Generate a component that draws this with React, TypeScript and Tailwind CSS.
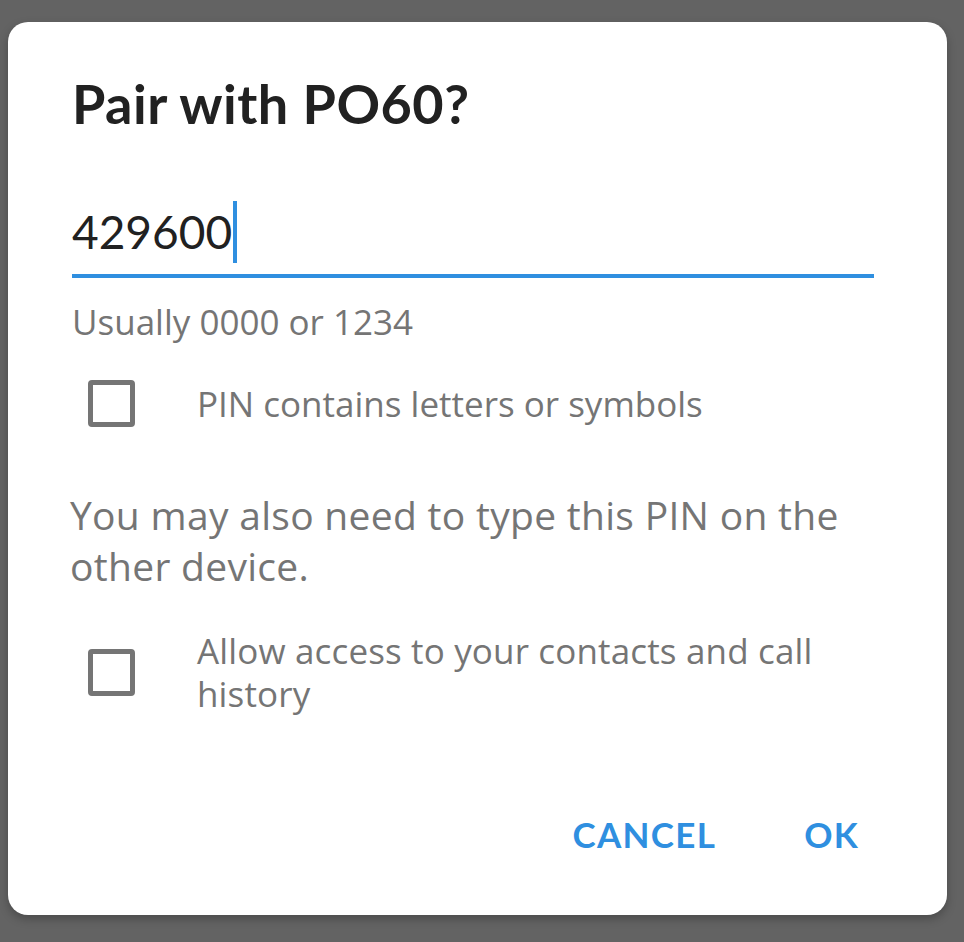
export default function App() {
  return (
    <div
      className="w-[964px] h-[942px] bg-[#636363] pt-[22px] pl-[8px]"
      style={{ fontFamily: "'Open Sans', 'Noto Sans', sans-serif" }}
    >
      <div className="w-[939px] h-[893px] rounded-[20px] bg-white shadow-[0_4px_10px_rgba(0,0,0,0.25)] flex flex-col pl-[64px] pr-[73px]">
        <h1
          className="mt-[54px] text-[54px] leading-[56px] font-bold tracking-[0.5px] text-[#212121]"
          style={{ fontFamily: "Lato, sans-serif" }}
        >
          Pair with PO60?
        </h1>

        <div className="mt-[69px] flex items-center h-[62px]">
          <span className="text-[46px] leading-[62px] text-[#212121]" style={{ fontFamily: "Lato, sans-serif" }}>
            429600
          </span>
          <span className="ml-[1px] w-[4px] h-[62px] bg-[#2f8fe0]" />
        </div>
        <div className="mt-[11px] h-[4px] bg-[#2f8fe0]" />

        <p className="mt-[24px] text-[35px] leading-[40px] text-[#757575]">Usually 0000 or 1234</p>

        <label className="mt-[38px] flex items-center">
          <span className="ml-[16px] shrink-0 w-[47px] h-[47px] rounded-[4px] border-[5px] border-[#757575]" />
          <span className="ml-[62px] text-[35px] leading-[42px] text-[#757575]">
            PIN contains letters or symbols
          </span>
        </label>

        <p className="mt-[62px] -ml-[2px] text-[39px] leading-[51px] tracking-[0.3px] text-[#757575]">
          You may also need to type this PIN on the other device.
        </p>

        <label className="mt-[38px] flex items-center">
          <span className="ml-[16px] shrink-0 w-[47px] h-[47px] rounded-[4px] border-[5px] border-[#757575]" />
          <span className="ml-[62px] text-[35px] leading-[43px] tracking-[0.15px] text-[#757575]">
            Allow access to your contacts and call history
          </span>
        </label>

        <div
          className="mt-auto mb-[61px] flex justify-end gap-[88px] pr-[15px]"
          style={{ fontFamily: "Lato, sans-serif" }}
        >
          <button className="text-[35px] leading-[40px] font-bold tracking-[1.3px] text-[#2f8fe0]">CANCEL</button>
          <button className="text-[35px] leading-[40px] font-bold tracking-[1.3px] text-[#2f8fe0]">OK</button>
        </div>
      </div>
    </div>
  );
}
